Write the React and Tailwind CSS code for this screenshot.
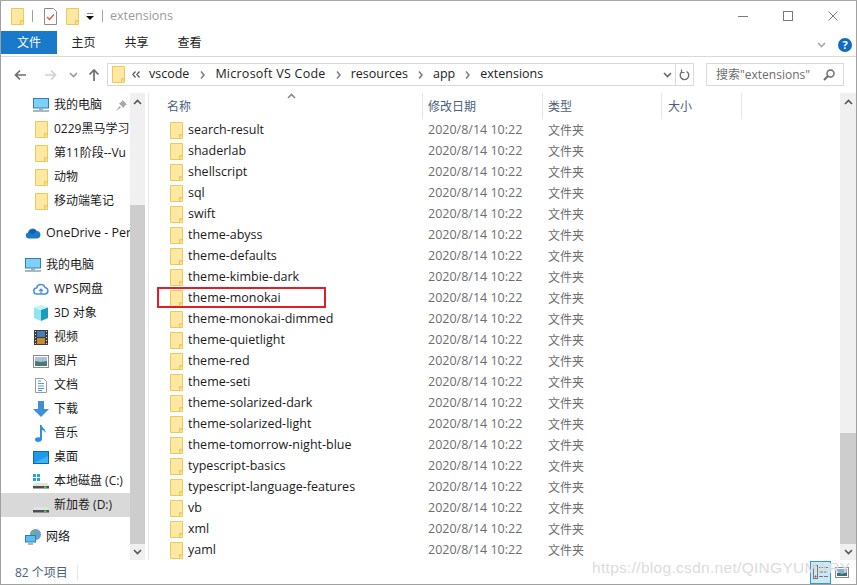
import React from "react";

const uiFont = { fontFamily: '"Open Sans","Noto Sans CJK SC",sans-serif' };

function Folder({ className = "" }) {
  return (
    <svg width="13" height="17" viewBox="0 0 13 17" className={className}>
      <path d="M.5.5h12v16H.5z" fill="#ffe9a2" stroke="#ecc95c" />
      <path d="M9.500 16.500v-4h3" fill="#f6d470" stroke="#ecc95c" />
    </svg>
  );
}

function Monitor() {
  return (
    <svg width="16" height="14" viewBox="0 0 16 14">
      <rect x=".5" y=".5" width="15" height="9.500" fill="#7fd0f7" stroke="#2f7fb8" />
      <path d="M6 10.500h4V12H6z" fill="#9aa9b5" />
      <path d="M0 13h16" stroke="#8aa0b2" strokeWidth="1.500" />
    </svg>
  );
}

const Cloud = () => (
  <svg width="16" height="11" viewBox="0 0 16 11">
    <path d="M3.500 10.500A3 3 0 0 1 3 4.600 4.600 4.600 0 0 1 11.600 3 3.800 3.800 0 0 1 12.500 10.500Z" fill="#1e78c8" />
    <path d="M4 5a4.500 4.500 0 0 1 7.600-2l-3.600 3z" fill="#0f5fad" />
  </svg>
);

const WpsCloud = () => (
  <svg width="16" height="12" viewBox="0 0 16 12" fill="none" stroke="#4a8fe0" strokeWidth="1.500">
    <path d="M4 11A3 3 0 0 1 3.600 5 4.400 4.400 0 0 1 12 4.400 3.400 3.400 0 0 1 12.500 11Z" />
    <path d="M6 8l2-2 2 2M8 6v5" strokeWidth="1.200" />
  </svg>
);

const Cube = () => (
  <svg width="16" height="16" viewBox="0 0 16 16">
    <path d="M8 5L1 2.500V13l7 3z" fill="#8fe6ef" />
    <path d="M8 5l7-2.500L8 0 1 2.500z" fill="#bdf3f7" />
    <path d="M8 5v11l7-3V2.500z" fill="#1a9cb8" />
  </svg>
);

const Film = () => (
  <svg width="14" height="15" viewBox="0 0 14 15">
    <rect width="14" height="15" fill="#3b3b3b" />
    <rect x="3" y="1" width="8" height="6" fill="#3f7fb5" />
    <rect x="3" y="8" width="8" height="6" fill="#c98a2c" />
    <path d="M1 1.500h1M1 4.500h1M1 7.500h1M1 10.500h1M1 13.500h1M12 1.500h1M12 4.500h1M12 7.500h1M12 10.500h1M12 13.500h1" stroke="#ddd" />
  </svg>
);

const Picture = () => (
  <svg width="16" height="13" viewBox="0 0 16 13">
    <rect x=".5" y=".5" width="15" height="12" fill="#fff" stroke="#8c8c8c" />
    <rect x="2" y="2" width="12" height="5" fill="#a9c4e0" />
    <path d="M2 6l6 1 6-1v5H2z" fill="#4d7a70" />
  </svg>
);

const Doc = () => (
  <svg width="12" height="15" viewBox="0 0 12 15">
    <path d="M.5.500h8l3 3v11H.5z" fill="#fff" stroke="#9a9a9a" />
    <path d="M3 3h3M3 5.500h6M3 8h6M3 10.500h6M3 12.500h4" stroke="#4a9bd8" />
  </svg>
);

const Download = () => (
  <svg width="16" height="16" viewBox="0 0 16 16">
    <path d="M5 0h6v8h5l-8 8-8-8h5z" fill="#3d8fdc" />
  </svg>
);

const Note = () => (
  <svg width="12" height="17" viewBox="0 0 12 17">
    <path d="M5 0h1.500c.3 3 5 4 4 8-.6-2-2.500-3-3.500-3v9c0 2-2 3-4 3s-3-1-3-2.500S2 12 5 12.500z" fill="#2e8fe0" />
  </svg>
);

const Desktop = () => (
  <svg width="16" height="13" viewBox="0 0 16 13">
    <rect x=".5" y=".5" width="15" height="12" fill="#1c9bea" stroke="#0f66a8" />
    <path d="M1 12L15 5v7z" fill="#3fb3f3" />
  </svg>
);

const Drive = ({ windows }) => (
  <svg width="16" height="15" viewBox="0 0 16 15">
    {windows && <path d="M0 0h3v3H0zM4 0h3v3H4zM0 4h3v3H0zM4 4h3v3H4z" fill="#22a3e8" />}
    <path d="M2 9h12l2 2v3H0v-3z" fill="#e3e3e3" />
    <path d="M0 12h16v2.500H0z" fill="#4f4f4f" />
    <rect x="11" y="12.500" width="2.500" height="1.500" fill="#4ed04e" />
  </svg>
);

const Network = () => (
  <svg width="16" height="16" viewBox="0 0 16 16">
    <circle cx="10.500" cy="5.500" r="5.500" fill="#6a9fd0" />
    <path d="M7 2c2-1 3 1 2 3S6 6 7 2z" fill="#7cb35f" />
    <rect x=".5" y="6.500" width="10" height="6.500" fill="#5ac0f2" stroke="#2f7fb8" />
    <path d="M3 15h5" stroke="#8aa0b2" strokeWidth="1.500" />
  </svg>
);

const Chevron = ({ up, className = "" }) => (
  <svg width="9" height="6" viewBox="0 0 9 6" fill="none" stroke="currentColor" strokeWidth="1.600" className={className}>
    <path d={up ? "M1 5l3.500-3.500L8 5" : "M1 1l3.500 3.500L8 1"} />
  </svg>
);

const Crumb = () => (
  <svg width="5" height="8" viewBox="0 0 5 8" fill="none" stroke="#7a7a7a" strokeWidth="1.500" className="ml-[10px] mr-[10px] shrink-0">
    <path d="M1 .5L4 4 1 7.500" />
  </svg>
);

function NavRow({ icon, label, indent, selected, size = "text-[12px]" }) {
  return (
    <div className={`flex h-6 items-center overflow-hidden whitespace-nowrap text-[#1a1a1a] ${size} ${selected ? "bg-[#d9d9d9]" : ""} ${indent ? "pl-8" : "pl-6"}`}>
      <span className="flex w-[21px] shrink-0 justify-start">{icon}</span>
      {label}
    </div>
  );
}

const names = [
  "search-result", "shaderlab", "shellscript", "sql", "swift", "theme-abyss", "theme-defaults",
  "theme-kimbie-dark", "theme-monokai", "theme-monokai-dimmed", "theme-quietlight", "theme-red",
  "theme-seti", "theme-solarized-dark", "theme-solarized-light", "theme-tomorrow-night-blue",
  "typescript-basics", "typescript-language-features", "vb", "xml", "yaml",
];

function Scrollbar({ before, thumb, width }) {
  return (
    <div className={`flex shrink-0 flex-col bg-[#f0f0f0] text-[#555] ${width}`}>
      <div className="flex h-[17px] shrink-0 items-center justify-center"><Chevron up /></div>
      <div className={`shrink-0 ${before}`} />
      <div className={`shrink-0 bg-[#cdcdcd] ${thumb}`} />
      <div className="flex-1" />
      <div className="flex h-[16px] shrink-0 items-center justify-center"><Chevron /></div>
    </div>
  );
}

function HeaderCell({ width, pad = "pl-[5px]", children }) {
  return (
    <div className={`flex h-[26px] shrink-0 items-center border-r border-[#e5e5e5] pt-[2px] text-[12px] text-[#4c607a] ${width} ${pad}`}>
      {children}
    </div>
  );
}

function RibbonTab({ width = "w-[53px]", active, children }) {
  return (
    <div className={`flex h-[23px] items-center justify-center pt-[1px] text-[12px] ${width} ${active ? "bg-[#1979ca] text-white" : "text-[#222]"}`}>
      {children}
    </div>
  );
}

export default function App() {
  return (
    <div className="relative flex h-[585px] w-[857px] flex-col overflow-hidden border border-t-[#a8a8a8] border-x-[#a0a0a0] border-b-[#a0a0a0] bg-white" style={uiFont}>
      {/* Title bar */}
      <div className="flex h-[30px] shrink-0 items-center pl-[10px]">
        <Folder />
        <div className="ml-[8px] h-[12px] w-px bg-[#a0a0a0]" />
        <svg width="13" height="17" viewBox="0 0 13 17" className="ml-[11px]">
          <path d="M.5.500h9l3 3v13H.5z" fill="#fff" stroke="#8a8a8a" />
          <path d="M3 9l2.500 2.500L10 6.500" fill="none" stroke="#e2572b" strokeWidth="1.300" />
        </svg>
        <Folder className="ml-[9px]" />
        <svg width="8" height="8" viewBox="0 0 8 8" className="ml-[7px] mt-[2px]">
          <path d="M1 0h6" stroke="#111" />
          <path d="M0 3h8L4 7z" fill="#111" />
        </svg>
        <div className="ml-[8px] h-[12px] w-px bg-[#a0a0a0]" />
        <span className="ml-[7px] text-[12.500px] text-[#9b9b9b]">extensions</span>
        <div className="flex-1" />
        <div className="flex items-center gap-[35px] pr-[18px]">
          <svg width="10" height="1"><path d="M0 .5h10" stroke="#7a7a7a" /></svg>
          <svg width="10" height="10"><rect x=".5" y=".5" width="9" height="9" fill="none" stroke="#7a7a7a" /></svg>
          <svg width="10" height="10"><path d="M.5.500l9 9M9.500.500l-9 9" stroke="#7a7a7a" /></svg>
        </div>
      </div>

      {/* Ribbon tabs */}
      <div className="flex h-[26px] shrink-0 items-start border-b border-[#dadada]">
        <RibbonTab width="w-[56px]" active>文件</RibbonTab>
        <RibbonTab>主页</RibbonTab>
        <RibbonTab>共享</RibbonTab>
        <RibbonTab>查看</RibbonTab>
        <div className="flex-1" />
        <div className="flex h-[27px] items-center gap-[12px] pr-[4px]">
          <Chevron className="text-[#a8a8a8]" />
          <div className="flex size-[14px] items-center justify-center rounded-full bg-[#0f6cc0] text-[11px] font-bold leading-none text-white">?</div>
        </div>
      </div>

      {/* Address bar */}
      <div className="flex h-[36px] shrink-0 items-start pl-[13px] pr-[12px] pt-[6px]">
        <div className="flex h-[23px] items-center">
          <svg width="13" height="12" viewBox="0 0 13 12" fill="none" stroke="#6d6d6d" strokeWidth="1.700">
            <path d="M12 6H2M6 1.500L1.500 6 6 10.500" />
          </svg>
          <svg width="13" height="12" viewBox="0 0 13 12" fill="none" stroke="#d0d0d0" strokeWidth="1.700" className="ml-[17px]">
            <path d="M1 6h10M7 1.500L11.500 6 7 10.500" />
          </svg>
          <Chevron className="ml-[12px] text-[#9a9a9a]" />
          <svg width="12" height="13" viewBox="0 0 12 13" fill="none" stroke="#6d6d6d" strokeWidth="1.700" className="ml-[10px]">
            <path d="M6 13V2M1.500 6.500L6 2l4.500 4.500" />
          </svg>
        </div>
        <div className="ml-[7px] flex h-[23px] w-[587px] items-center border border-[#d9d9d9] text-[12.500px] text-[#222]">
          <Folder className="ml-[4px] shrink-0" />
          <svg width="8" height="7" viewBox="0 0 8 7" fill="none" stroke="#555" strokeWidth="1.200" className="ml-[7px] shrink-0">
            <path d="M3.500.5L.8 3.500l2.700 3M7.500.5L4.800 3.500l2.700 3" />
          </svg>
          <span className="ml-[9px] mr-[1px]">vscode</span>
          <Crumb />
          <span className="tracking-[0.250px]">Microsoft VS Code</span>
          <Crumb />
          <span>resources</span>
          <Crumb />
          <span>app</span>
          <Crumb />
          <span>extensions</span>
          <div className="flex-1" />
          <Chevron className="mr-[3px] text-[#666]" />
          <div className="flex h-full w-[18px] items-center justify-center border-l border-[#d9d9d9]">
            <svg width="11" height="12" viewBox="0 0 11 12" fill="none" stroke="#6d6d6d" strokeWidth="1.400">
              <path d="M7.500 2.500A4.300 4.300 0 1 1 3 2.800" />
              <path d="M2.500 .5v3h3" strokeWidth="1.200" />
            </svg>
          </div>
        </div>
        <div className="ml-[12px] flex h-[23px] flex-1 items-center border border-[#d9d9d9] pl-[9px] pr-[8px] text-[12px] text-[#6d6d6d]">
          <span>搜索"extensions"</span>
          <div className="flex-1" />
          <svg width="12" height="12" viewBox="0 0 12 12" fill="none" stroke="#6d6d6d" strokeWidth="1.500">
            <circle cx="7.500" cy="4.500" r="3.500" />
            <path d="M5 7l-4 4" strokeWidth="2" />
          </svg>
        </div>
      </div>

      {/* Navigation pane and file list */}
      <div className="flex min-h-0 flex-1">
        <div className="w-[129px] shrink-0 overflow-hidden">
          <NavRow indent icon={<Monitor />} label={<span className="flex w-full items-center">我的电脑<svg width="11" height="11" viewBox="0 0 11 11" className="ml-[14px]"><path d="M6.500 0L11 4.500 9.500 5 7.500 8 3 3.500 6 1.500zM3.500 6L0 11l5-3.500z" fill="#a8a8a8" /></svg></span>} />
          {["0229黑马学习", "第11阶段--Vu", "动物", "移动端笔记"].map((t) => (
            <NavRow key={t} indent icon={<Folder className="ml-[2px]" />} label={t} />
          ))}
          <div className="h-2" />
          <NavRow size="text-[12.500px]" icon={<Cloud />} label="OneDrive - Personal" />
          <div className="h-2" />
          <NavRow icon={<Monitor />} label="我的电脑" />
          <NavRow indent icon={<WpsCloud />} label="WPS网盘" />
          <NavRow indent icon={<Cube />} label="3D 对象" />
          <NavRow indent icon={<span className="ml-[1px]"><Film /></span>} label="视频" />
          <NavRow indent icon={<Picture />} label="图片" />
          <NavRow indent icon={<span className="ml-[2px]"><Doc /></span>} label="文档" />
          <NavRow indent icon={<Download />} label="下载" />
          <NavRow indent icon={<span className="ml-[2px]"><Note /></span>} label="音乐" />
          <NavRow indent icon={<Desktop />} label="桌面" />
          <NavRow indent icon={<Drive windows />} label="本地磁盘 (C:)" />
          <NavRow indent selected icon={<Drive />} label="新加卷 (D:)" />
          <div className="h-2" />
          <NavRow icon={<Network />} label="网络" />
        </div>
        <Scrollbar width="w-[15px]" before="h-[95px]" thumb="h-[339px]" />
        <div className="ml-[3px] w-px shrink-0 bg-[#e8e8e8]" />

        <div className="flex min-w-0 flex-1 flex-col pl-[7px]">
          <div className="relative flex">
            <HeaderCell width="w-[267px]" pad="pl-[11px]">名称</HeaderCell>
            <HeaderCell width="w-[120px]">修改日期</HeaderCell>
            <HeaderCell width="w-[119px]">类型</HeaderCell>
            <HeaderCell width="w-[80px]" pad="pl-[6px]">大小</HeaderCell>
            <Chevron up className="absolute left-[131px] top-0 text-[#888]" />
          </div>
          <div className="pt-[1px]">
            {names.map((n) => (
              <div key={n} className="flex h-[21px] items-center">
                <div className="flex w-[267px] shrink-0 items-center pl-[14px] text-[12.500px] text-[#1a1a1a]">
                  <Folder className="mr-[5px]" />
                  {n}
                </div>
                <div className="w-[120px] shrink-0 pl-[5px] text-[12.500px] text-[#6d6d6d]">2020/8/14 10:22</div>
                <div className="pl-[5px] text-[12px] text-[#6d6d6d]">文件夹</div>
              </div>
            ))}
          </div>
        </div>
        <Scrollbar width="w-[16px]" before="h-[323px]" thumb="h-[111px]" />
      </div>

      {/* Status bar */}
      <div className="flex h-[24px] shrink-0 items-center pl-[14px] pr-[7px] text-[12px] text-[#4c607a]">
        <span className="pt-[1px]">82 个项目</span>
        <div className="ml-[9px] h-[15px] w-px bg-[#e5e5e5]" />
        <div className="flex-1" />
        <div className="flex h-[23px] w-[21px] flex-col items-center justify-center border border-[#2f9ad6] bg-[#cce8f7]">
          <svg width="16" height="14" viewBox="0 0 16 14" fill="none" stroke="#777">
            <rect x=".5" y=".5" width="4" height="13" />
            <path d="M6 2.500h4M11 2.500h4M6 7h4M11 7h4M6 11.500h4M11 11.500h4" />
            <path d="M2 11h1v1H2z" stroke="#c33" />
          </svg>
        </div>
        <svg width="14" height="11" viewBox="0 0 14 11" className="ml-[4px]">
          <rect x=".5" y=".5" width="13" height="10" fill="#fff" stroke="#8c8c8c" />
          <rect x="2" y="2" width="10" height="4" fill="#7fb0e8" />
          <path d="M2 5.500l5 1 5-1V9H2z" fill="#3f6f68" />
        </svg>
      </div>

      {/* Blog watermark and the highlight drawn around one folder */}
      <div className="pointer-events-none absolute left-[591px] top-[555px] whitespace-nowrap font-['Liberation_Sans'] text-[15.500px] tracking-[0.300px] text-[#dcdcdc]">
        https://blog.csdn.net/QINGYUMARY
      </div>
      <div className="pointer-events-none absolute left-[156px] top-[286px] h-[21px] w-[169px] border-2 border-[#e11f26]" />
    </div>
  );
}
